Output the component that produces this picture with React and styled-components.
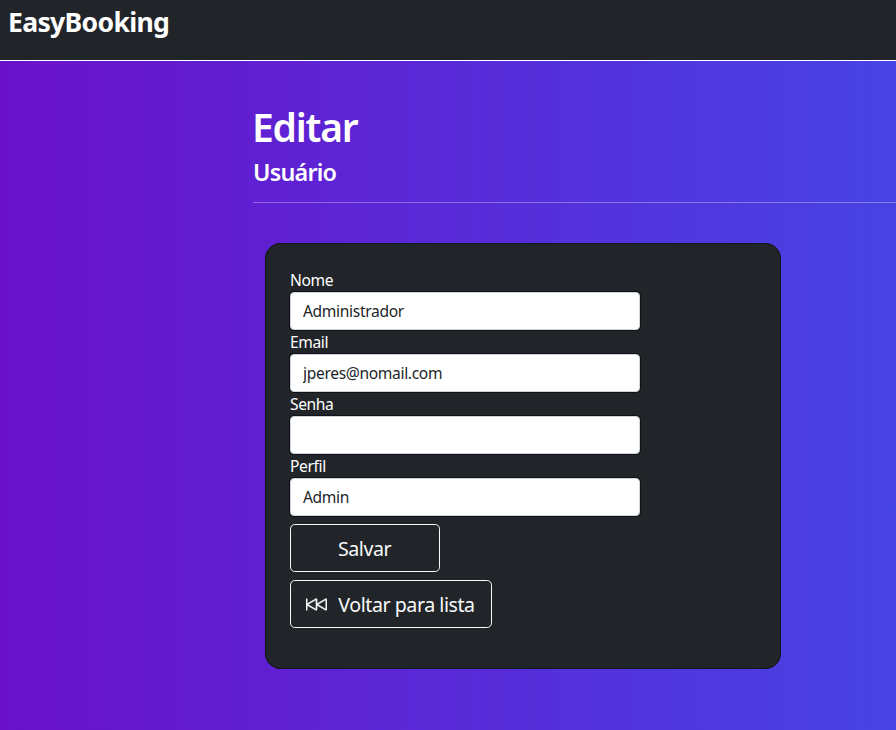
import React from 'react';
import styled, { createGlobalStyle } from 'styled-components';
import { BsSkipBackward } from 'react-icons/bs';

const GlobalStyle = createGlobalStyle`
  *, *::before, *::after { box-sizing: border-box; }
  body {
    margin: 0;
    overflow: hidden;
    font-family: "Noto Sans", "Open Sans", sans-serif;
    font-size: 15.6px;
    line-height: 24px;
    letter-spacing: -0.34px;
    color: #fff;
  }
`;

const Page = styled.div`
  display: flex;
  flex-direction: column;
  height: 730px;
  overflow: hidden;
  background: linear-gradient(to right, #6a11cb 0, #2575fc 1792px);
`;

const Header = styled.header`
  flex: none;
  height: 61px;
  padding: 3px 8px 0;
  background: #212529;
  border-bottom: 1px solid #fff;
`;

const Brand = styled.div`
  font-size: 26.6px;
  font-weight: 700;
  line-height: 39px;
  letter-spacing: -0.7px;
`;

const Main = styled.main`
  display: flex;
  flex-direction: column;
  padding: 42px 0 0 253px;
`;

const Title = styled.h1`
  margin: 0 0 8px -1px;
  font-size: 39px;
  font-weight: 600;
  line-height: 48px;
  letter-spacing: -1.2px;
`;

const Subtitle = styled.h4`
  margin: -1px 0 0;
  font-size: 23.4px;
  font-weight: 600;
  line-height: 29px;
  letter-spacing: -0.8px;
`;

const Divider = styled.hr`
  width: 100%;
  height: 1px;
  margin: 15px 0 40px;
  border: 0;
  background: #fff;
  opacity: 0.32;
`;

const Card = styled.form`
  display: flex;
  flex-direction: column;
  align-items: flex-start;
  width: 516px;
  height: 426px;
  margin-left: 12px;
  padding: 25px;
  border-radius: 16px;
  background: #212529;
  box-shadow: inset 0 0 0 1px #13181a;
`;

const Label = styled.label`
  height: 24px;
  letter-spacing: -0.38px;
`;

const Input = styled.input`
  display: block;
  width: 350px;
  height: 38px;
  padding: 6px 12px;
  border: 1px solid #ced4da;
  border-radius: 4px;
  outline: 0;
  background: #fff;
  box-shadow: 0 0 0 1px #101316;
  color: #212529;
  font: inherit;
  letter-spacing: inherit;
`;

const Button = styled.button`
  display: flex;
  align-items: center;
  justify-content: center;
  gap: 11px;
  width: ${({ $width }) => $width}px;
  height: 48px;
  margin-top: 8px;
  padding: 2px 1px 0 0;
  border: 1px solid #f8f9fa;
  border-radius: 4.8px;
  background: transparent;
  color: #f8f9fa;
  font-family: inherit;
  font-size: 19.6px;
  line-height: 30px;
  letter-spacing: -0.45px;
`;

const BackIcon = styled(BsSkipBackward)`
  flex: none;
  width: 21px;
  height: 21px;
  margin-top: -2px;
  stroke: currentColor;
  stroke-width: 0.25px;
`;

const fields = [
  { id: 'nome', label: 'Nome', value: 'Administrador', type: 'text' },
  { id: 'email', label: 'Email', value: 'jperes@nomail.com', type: 'text' },
  { id: 'senha', label: 'Senha', value: '', type: 'password' },
  { id: 'perfil', label: 'Perfil', value: 'Admin', type: 'text' },
];

export default function App() {
  return (
    <Page>
      <GlobalStyle />
      <Header>
        <Brand>EasyBooking</Brand>
      </Header>
      <Main>
        <Title>Editar</Title>
        <Subtitle>Usuário</Subtitle>
        <Divider />
        <Card>
          {fields.map(({ id, label, value, type }) => (
            <React.Fragment key={id}>
              <Label htmlFor={id}>{label}</Label>
              <Input id={id} type={type} defaultValue={value} />
            </React.Fragment>
          ))}
          <Button type="button" $width={150}>Salvar</Button>
          <Button type="button" $width={202}>
            <BackIcon />
            Voltar para lista
          </Button>
        </Card>
      </Main>
    </Page>
  );
}
